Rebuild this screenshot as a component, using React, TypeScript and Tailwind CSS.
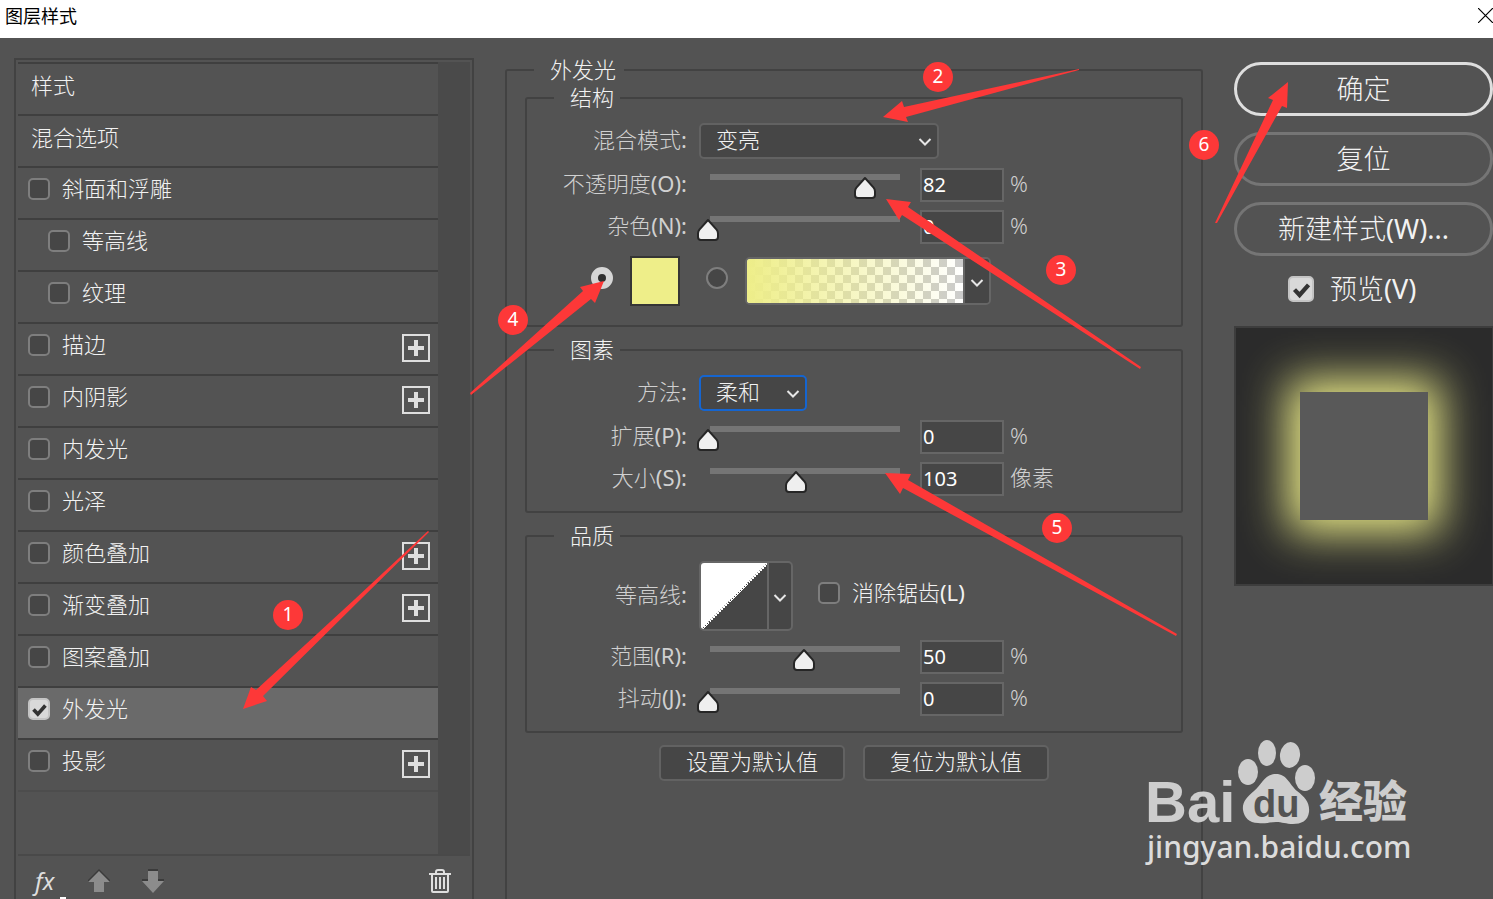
import { useState } from "react";
import type { ReactNode } from "react";

const styles = [
  { name: "斜面和浮雕" },
  { name: "等高线", child: true },
  { name: "纹理", child: true },
  { name: "描边", add: true },
  { name: "内阴影", add: true },
  { name: "内发光" },
  { name: "光泽" },
  { name: "颜色叠加", add: true },
  { name: "渐变叠加", add: true },
  { name: "图案叠加" },
  { name: "外发光", active: true },
  { name: "投影", add: true },
];

const arrows = [
  "243,709 251,687 256,690 355,599 428,531 429,532 360,600 263,696 267,701",
  "883,117 902,101 904,107 1079,69 1079,70 906,117 908,122",
  "886,199 911,202 908,207 1141,367 1140,369 902,215 899,220",
  "604,281 580,287 583,291 470,393 471,395 591,299 595,303",
  "885,473 911,474 908,480 1177,634 1176,636 903,488 900,494",
  "1288,82 1268,98 1273,100 1215,223 1217,223 1282,106 1287,108",
];

const badges = [
  { x: 288, y: 615 },
  { x: 938, y: 77 },
  { x: 1061, y: 270 },
  { x: 513, y: 320 },
  { x: 1057, y: 528 },
  { x: 1204, y: 145 },
];

function Chevron() {
  return (
    <svg width="14" height="10" viewBox="0 0 14 10" fill="none" stroke="#e6e6e6" strokeWidth="2">
      <path d="M1.5 2 7 7.5 12.5 2" />
    </svg>
  );
}

function Checkbox({ id, checked, large }: { id: string; checked?: boolean; large?: boolean }) {
  return (
    <span className={large ? "relative block size-[26px] shrink-0" : "relative block size-[22px] shrink-0"}>
      <input
        id={id}
        type="checkbox"
        defaultChecked={checked}
        className="peer block size-full appearance-none rounded-[5px] border-2 border-[#7e7e7e] bg-[#464646] checked:border-[#c4c4c4] checked:bg-[#d9d9d9]"
      />
      <svg
        viewBox="0 0 22 22"
        className="pointer-events-none absolute inset-0 hidden peer-checked:block"
        fill="none"
        stroke="#333"
        strokeWidth="3.6"
      >
        <path d="m5.5 11.5 4.3 4.6 7.6-8.6" />
      </svg>
    </span>
  );
}

function Group({ title, children }: { title: string; children: ReactNode }) {
  return (
    <fieldset className="rounded-[3px] border-2 border-[#424242]">
      <legend className="ml-[27px] pr-[6px] pb-[2px] pl-4 leading-[26px]">{title}</legend>
      {children}
    </fieldset>
  );
}

type RowProps = { label: string; hotkey?: string; id: string; children: ReactNode };

function Row({ label, hotkey = "", id, children }: RowProps) {
  return (
    <div className="flex items-center">
      <label htmlFor={id} className="mr-3 w-[160px] shrink-0 pb-[4px] text-right text-[#d0d0d0]">
        {label}
        <span className="font-normal">{hotkey}:</span>
      </label>
      {children}
    </div>
  );
}

function Select({ id, value, focused }: { id: string; value: string; focused?: boolean }) {
  return (
    <span className={focused ? "relative w-[108px]" : "relative w-[240px]"}>
      <select
        id={id}
        className={
          focused
            ? "block h-9 w-full appearance-none rounded-[5px] border-2 border-[#1565d0] bg-[#464646] pb-[5px] pl-[15px]"
            : "block h-9 w-full appearance-none rounded-[5px] border-2 border-[#626262] bg-[#464646] pb-[5px] pl-[15px]"
        }
      >
        <option>{value}</option>
      </select>
      <span className="pointer-events-none absolute top-[14px] right-[7px]">
        <Chevron />
      </span>
    </span>
  );
}

type SliderProps = { label: string; hotkey: string; id: string; initial: number; max?: number; unit?: string };

function SliderRow({ label, hotkey, id, initial, max = 100, unit = "%" }: SliderProps) {
  const [value, setValue] = useState(initial);
  return (
    <Row label={label} hotkey={hotkey} id={id}>
      <div className="relative mr-5 ml-[9px] h-[34px] w-[192px] shrink-0 pt-[6px] pl-[2px]">
        <div className="h-[6px] bg-[#757575]" />
        <svg
          width="24"
          height="24"
          viewBox="0 0 24 24"
          className="absolute top-2 -translate-x-1/2"
          style={{ left: `${(value / max) * 100}%` }}
        >
          <path
            d="M12 2 20.6 11.6Q22 13.4 22 15.5V19Q22 22 19 22H5Q2 22 2 19V15.5Q2 13.4 3.4 11.6Z"
            fill="#efefef"
            stroke="#262626"
            strokeWidth="2"
            strokeLinejoin="round"
          />
        </svg>
        <input
          type="range"
          aria-label={label}
          min={0}
          max={max}
          value={value}
          onChange={(e) => setValue(Number(e.target.value))}
          className="absolute inset-0 h-full w-full opacity-0"
        />
      </div>
      <input
        id={id}
        type="text"
        value={value}
        onChange={(e) => setValue(Number(e.target.value) || 0)}
        className="h-[34px] w-[84px] border-2 border-[#666] bg-[#464646] pb-[2px] pl-[1px] text-[20px] font-normal text-white"
      />
      <span className="ml-[6px] pb-[4px] text-[#d0d0d0]">{unit}</span>
    </Row>
  );
}

function StyleList() {
  return (
    <aside className="mt-5 ml-[14px] flex w-[460px] shrink-0 flex-col border-2 border-b-0 border-[#424242] px-[2px] pt-[2px]">
      <div className="flex flex-1">
        <ul className="w-[420px]">
          {["样式", "混合选项"].map((name) => (
            <li key={name} className="h-[52px] border-t-2 border-[#3f3f3f]">
              <button className="block h-full w-full pb-[8px] pl-[13px] text-left">{name}</button>
            </li>
          ))}
          {styles.map((s) => (
            <li
              key={s.name}
              className={
                s.active
                  ? "flex h-[52px] items-center border-t-2 border-[#3f3f3f] bg-[#6a6a6a] pr-2 pl-[10px]"
                  : s.child
                    ? "flex h-[52px] items-center border-t-2 border-[#3f3f3f] pr-2 pl-[30px]"
                    : "flex h-[52px] items-center border-t-2 border-[#3f3f3f] pr-2 pl-[10px]"
              }
            >
              <div className="flex flex-1 items-center gap-3 pb-[8px]">
                <Checkbox id={s.name} checked={s.active} />
                <label htmlFor={s.name} className="pb-[2px] leading-[28px]">
                  {s.name}
                </label>
              </div>
              {s.add && (
                <button
                  aria-label={`添加${s.name}`}
                  className="mb-[2px] flex size-7 items-center justify-center border-2 border-[#dedede]"
                >
                  <svg width="16" height="16" viewBox="0 0 16 16" stroke="#dedede" strokeWidth="4">
                    <path d="M8 0v16M0 8h16" />
                  </svg>
                </button>
              )}
            </li>
          ))}
          <li className="border-t-2 border-[#4d4d4d]" />
        </ul>
        <div className="w-8 bg-[#4a4a4a]" />
      </div>
      <div className="flex h-[45px] items-center border-t-2 border-[#494949] pt-[6px] pr-[19px] pl-[17px]">
        <button className="relative w-[53px] text-left text-[24px] leading-[28px] font-normal text-[#dedede] italic">
          fx
          <span className="absolute -bottom-[5px] left-[25px] h-[3px] w-[6px] bg-white" />
        </button>
        <button aria-label="上移" className="w-[54px]">
          <svg width="22" height="24" viewBox="0 0 22 24">
            <path d="M11 0 22 11v2h-6v10H6V13H0v-2Z" fill="#3b3b3b" />
            <path d="M11 2 22 13h-6v10H6V13H0Z" fill="#8c8c8c" />
          </svg>
        </button>
        <button aria-label="下移">
          <svg width="22" height="24" viewBox="0 0 22 24">
            <path d="M6 0h10v10h6v2H0v-2h6Z" fill="#3b3b3b" />
            <path d="M6 2h10v10h6L11 24 0 12h6Z" fill="#8c8c8c" />
          </svg>
        </button>
        <button aria-label="删除" className="ml-auto">
          <svg width="22" height="24" viewBox="0 0 22 24" fill="none" stroke="#dedede" strokeWidth="2">
            <path d="M0 5h22M7 5V3q0-2 2-2h4q2 0 2 2v2M3 5v17q0 1 1 1h14q1 0 1-1V5M7 8v12M11 8v12M15 8v12" />
          </svg>
        </button>
      </div>
    </aside>
  );
}

function OuterGlow() {
  return (
    <fieldset className="mx-[31px] mt-[18px] min-w-0 flex-1 rounded-t-[3px] border-2 border-b-0 border-[#424242] px-[18px]">
      <legend className="ml-[9px] pr-2 pb-[2px] pl-4 leading-[26px]">外发光</legend>
      <div className="flex flex-col gap-[9px]">
        <Group title="结构">
          <div className="flex flex-col gap-2 pt-[11px] pb-[19px]">
            <div className="mb-[1px]">
              <Row label="混合模式" id="mode">
                <Select id="mode" value="变亮" />
              </Row>
            </div>
            <SliderRow label="不透明度" hotkey="(O)" id="opacity" initial={82} />
            <SliderRow label="杂色" hotkey="(N)" id="noise" initial={0} />
            <div className="mt-1 flex items-center pl-16">
              <input
                type="radio"
                name="fill"
                aria-label="颜色"
                defaultChecked
                className="mr-[17px] mb-[6px] size-[22px] appearance-none rounded-full border-2 border-[#7e7e7e] bg-[#464646] checked:border-7 checked:border-[#d6d6d6] checked:bg-[#303030]"
              />
              <button aria-label="发光颜色" className="size-[50px] border-2 border-[#353535] bg-[#eeee89]" />
              <input
                type="radio"
                name="fill"
                aria-label="渐变"
                className="mr-[17px] mb-[6px] ml-[26px] size-[22px] appearance-none rounded-full border-2 border-[#7e7e7e] bg-[#464646] checked:border-7 checked:border-[#d6d6d6] checked:bg-[#303030]"
              />
              <button aria-label="渐变样式" className="flex h-12 w-[246px] overflow-hidden rounded-[5px] border-2 border-[#666]">
                <span className="block h-full flex-1 bg-[repeating-conic-gradient(#fff_0_25%,#ccc_0_50%)] bg-[length:16px_16px]">
                  <span className="block h-full bg-linear-to-r from-[#eeee89] to-transparent" />
                </span>
                <span className="flex h-full w-[26px] items-center justify-center border-l-2 border-[#666] bg-[#464646] pt-1">
                  <Chevron />
                </span>
              </button>
            </div>
          </div>
        </Group>
        <Group title="图素">
          <div className="flex flex-col gap-2 pt-[11px] pb-[15px]">
            <div className="mb-[1px]">
              <Row label="方法" id="method">
                <Select id="method" value="柔和" focused />
              </Row>
            </div>
            <SliderRow label="扩展" hotkey="(P)" id="spread" initial={0} />
            <SliderRow label="大小" hotkey="(S)" id="size" initial={103} max={225} unit="像素" />
          </div>
        </Group>
        <Group title="品质">
          <div className="flex flex-col gap-2 pt-[11px] pb-[15px]">
            <div className="mb-[1px]">
              <Row label="等高线" id="contour">
                <button id="contour" className="flex h-[70px] w-[94px] overflow-hidden rounded-[5px] border-2 border-[#666] bg-[#464646]">
                  <svg viewBox="0 0 34 33" preserveAspectRatio="none" className="h-full flex-1">
                    <path d="M0 0H34L0 33Z" fill="#fff" />
                    <path
                      d="M34 0 0 33"
                      fill="none"
                      stroke="#fff"
                      strokeWidth="2"
                      strokeDasharray="1 0.4"
                      shapeRendering="crispEdges"
                    />
                  </svg>
                  <span className="flex h-full w-[24px] items-center justify-center border-l-2 border-[#666] pt-1">
                    <Chevron />
                  </span>
                </button>
                <div className="mb-[6px] ml-[25px] flex items-center gap-3">
                  <Checkbox id="antialias" />
                  <label htmlFor="antialias" className="pb-[2px]">
                    消除锯齿<span className="font-normal">(L)</span>
                  </label>
                </div>
              </Row>
            </div>
            <SliderRow label="范围" hotkey="(R)" id="range" initial={50} />
            <SliderRow label="抖动" hotkey="(J)" id="jitter" initial={0} />
          </div>
        </Group>
      </div>
      <div className="mt-3 flex justify-center gap-[18px]">
        {["设置为默认值", "复位为默认值"].map((name) => (
          <button key={name} className="h-9 w-[186px] rounded-[5px] border-2 border-[#626262] bg-[#464646] pb-[6px]">
            {name}
          </button>
        ))}
      </div>
    </fieldset>
  );
}

function Actions() {
  return (
    <div className="mt-6 flex w-[259px] shrink-0 flex-col gap-4 text-[27px]">
      <button className="h-[54px] rounded-full border-[3px] border-[#dedede]">确定</button>
      <button className="h-[54px] rounded-full border-[3px] border-[#757575]">复位</button>
      <button className="h-[54px] rounded-full border-[3px] border-[#757575]">
        新建样式<span className="font-normal">(W)...</span>
      </button>
      <div className="flex h-[38px] items-center gap-4 pb-[4px] pl-[54px]">
        <Checkbox id="preview" checked large />
        <label htmlFor="preview">
          预览<span className="font-normal">(V)</span>
        </label>
      </div>
      <div className="flex h-[260px] items-center justify-center border-2 border-r border-[#3d3d3d] bg-[#2b2b2b]">
        <div className="size-32 bg-[#595959] shadow-[0_0_42px_12px_#eeee89]" />
      </div>
    </div>
  );
}

function Watermark() {
  return (
    <svg
      width="280"
      height="140"
      viewBox="0 0 280 140"
      className="pointer-events-none absolute top-[735px] right-[73px]"
      fill="#cdcdcd"
    >
      <text x="5" y="87" fontSize="58" fontWeight="700" fontFamily="Liberation Sans, sans-serif">
        Bai
      </text>
      <ellipse cx="108" cy="37" rx="10" ry="13" />
      <ellipse cx="127" cy="18" rx="9" ry="13" />
      <ellipse cx="150" cy="20" rx="10" ry="13" transform="rotate(8 150 20)" />
      <ellipse cx="165" cy="43" rx="10" ry="13" />
      <path d="M136 39C147 39 149 49 157 56C165 62 170 68 169 77C168 86 161 89 153 89C146 89 142 87 136 87C130 87 126 89 118 88C109 88 104 82 103 75C102 67 107 62 114 56C122 49 125 39 136 39Z" />
      <text x="113" y="82" fontSize="38" fontWeight="700" fill="#535353" fontFamily="Liberation Sans, sans-serif">
        du
      </text>
      <text x="179" y="83" fontSize="44" fontWeight="900" fontFamily="Noto Sans CJK SC, sans-serif">
        经验
      </text>
      <text x="7" y="123" fontSize="30" fontWeight="500" fill="#dcdcdc" fontFamily="Noto Sans, sans-serif">
        jingyan.baidu.com
      </text>
    </svg>
  );
}

function Annotations() {
  return (
    <svg width="1493" height="899" className="pointer-events-none absolute top-0 left-0" fill="#fd3838">
      {arrows.map((points) => (
        <polygon key={points} points={points} />
      ))}
      {badges.map((b, i) => (
        <g key={i}>
          <circle cx={b.x} cy={b.y} r="15" />
          <text x={b.x} y={b.y + 6} fill="#fff" fontSize="19" fontWeight="400" textAnchor="middle">
            {i + 1}
          </text>
        </g>
      ))}
    </svg>
  );
}

export default function App() {
  return (
    <div className="relative flex min-h-screen flex-col overflow-hidden bg-[#535353] font-['Noto_Sans','Noto_Sans_CJK_SC',sans-serif] text-[22px] leading-[28px] font-light text-[#f2f2f2]">
      <header className="flex h-[38px] items-center justify-between bg-white pb-[7px] pl-[5px] text-black">
        <h1 className="text-[18px] font-normal">图层样式</h1>
        <button aria-label="关闭">
          <svg width="15" height="15" viewBox="0 0 15 15" stroke="#000" strokeWidth="1.2">
            <path d="M0 0 15 15M15 0 0 15" />
          </svg>
        </button>
      </header>
      <main className="flex flex-1">
        <StyleList />
        <OuterGlow />
        <Actions />
      </main>
      <Watermark />
      <Annotations />
    </div>
  );
}
